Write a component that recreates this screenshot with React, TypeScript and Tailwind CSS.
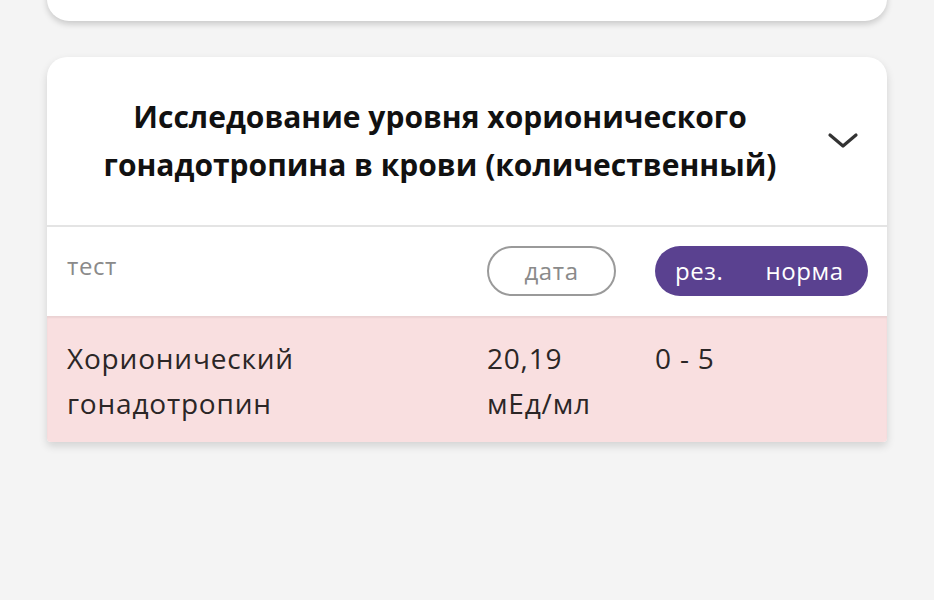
import React from "react";

const font = { fontFamily: '"Open Sans", "Noto Sans", sans-serif' };

export default function App() {
  return (
    <div className="min-h-[600px] w-[934px] overflow-hidden bg-[#f4f4f4] text-[#2b2626]" style={font}>
      {/* Верхня картка (хвіст) */}
      <div className="mx-[47px] -mt-[40px] h-[61px] rounded-b-[22px] bg-white shadow-[0_3px_6px_rgba(0,0,0,0.18)]" />

      {/* Картка дослідження */}
      <div className="mx-[47px] mt-[36px] rounded-t-[20px] rounded-b-[4px] bg-white shadow-[0_4px_8px_rgba(0,0,0,0.14)]">
        <div className="relative flex h-[170px] items-center justify-center border-b-2 border-[#e4e4e4] pl-[30px] pr-[84px]">
          <h2 className="text-center text-[30px] font-bold leading-[48px] text-[#111]">
            Исследование уровня хорионического
            <br />
            гонадотропина в крови (количественный)
          </h2>
          <svg
            className="absolute right-[28px] top-[74px]"
            width="32"
            height="20"
            viewBox="0 0 32 20"
            fill="none"
            stroke="#333"
            strokeWidth="3.2"
            strokeLinecap="round"
            strokeLinejoin="round"
          >
            <path d="M3 4 L16 15 L29 4" />
          </svg>
        </div>

        {/* Заголовки колонок */}
        <div className="flex h-[89px] items-start">
          <div className="w-[440px] pl-[20px] pt-[21px] text-[24px] tracking-[0.6px] text-[#8a8a8a]">тест</div>
          <div className="pt-[19px]">
            <div className="flex h-[50px] w-[129px] items-center justify-center rounded-full border-2 border-[#9a9a9a] text-[24px] tracking-[0.6px] text-[#8a8a8a]">
              дата
            </div>
          </div>
          <div className="ml-[39px] pt-[19px]">
            <div className="flex h-[50px] w-[213px] items-center rounded-full bg-[#5a4190] pl-[20px] text-[24px] tracking-[0.6px] text-white">
              <span>рез.</span>
              <span className="ml-[42px]">норма</span>
            </div>
          </div>
        </div>

        {/* Рядок результату */}
        <div className="flex h-[126px] items-start rounded-b-[4px] bg-[#f9dfe0] pt-[20px] text-[28px] leading-[45px] tracking-[0.8px] shadow-[inset_0_2px_2px_rgba(0,0,0,0.06)]">
          <div className="w-[440px] pl-[20px]">
            Хорионический
            <br />
            гонадотропин
          </div>
          <div className="w-[168px]">
            20,19
            <br />
            мЕд/мл
          </div>
          <div>0 - 5</div>
        </div>
      </div>
    </div>
  );
}
